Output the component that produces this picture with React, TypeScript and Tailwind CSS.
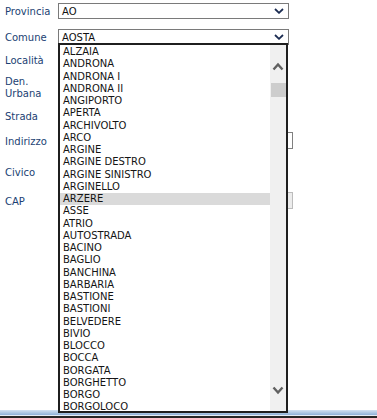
import React from "react";

const items = [
  "ALZAIA","ANDRONA","ANDRONA I","ANDRONA II","ANGIPORTO","APERTA","ARCHIVOLTO","ARCO","ARGINE","ARGINE DESTRO","ARGINE SINISTRO","ARGINELLO","ARZERE","ASSE","ATRIO","AUTOSTRADA","BACINO","BAGLIO","BANCHINA","BARBARIA","BASTIONE","BASTIONI","BELVEDERE","BIVIO","BLOCCO","BOCCA","BORGATA","BORGHETTO","BORGO","BORGOLOCO",
];

function Chevron() {
  return (
    <svg width="10" height="6" viewBox="0 0 10 6" className="shrink-0">
      <path d="M1 1 L5 4.8 L9 1" fill="none" stroke="#1b2c52" strokeWidth="1.8" />
    </svg>
  );
}

function Select({ value }: { value: string }) {
  return (
    <div className="flex h-[16px] w-[231px] items-center justify-between border border-[#7a7a7a] bg-white pl-[3px] pr-[4px] text-[10px] leading-none text-[#111]">
      <span className="mt-[1px]">{value}</span>
      <Chevron />
    </div>
  );
}

function Label({ children, className = "" }: { children: React.ReactNode; className?: string }) {
  return (
    <div className={"w-[58px] shrink-0 pl-[5px] text-[10px] leading-[11.6px] text-[#1b3f73] " + className}>
      {children}
    </div>
  );
}

export default function App() {
  return (
    <div
      className="relative flex h-[418px] w-[377px] flex-col overflow-hidden bg-white"
      style={{ fontFamily: '"DejaVu Sans", Verdana, sans-serif' }}
    >
      <div className="flex flex-col">
        <div className="mt-[3px] flex h-[16px] items-center">
          <Label className="mt-[2px]">Provincia</Label>
          <Select value="AO" />
        </div>
        <div className="mt-[10px] flex h-[16px] items-center">
          <Label className="mt-[2px]">Comune</Label>
          <Select value="AOSTA" />
        </div>
        <div className="mt-[7px] flex h-[16px] items-center">
          <Label className="mt-[2px]">Località</Label>
          <div className="h-[16px] w-[200px] border border-[#8a8a8a] bg-white" />
        </div>
        <div className="mt-[8px] flex h-[24px] items-center">
          <Label>
            Den.
            <br />
            Urbana
          </Label>
          <div className="h-[16px] w-[200px] border border-[#8a8a8a] bg-white" />
        </div>
        <div className="mt-[8px] flex h-[16px] items-center">
          <Label className="mt-[2px]">Strada</Label>
          <div className="h-[16px] w-[200px] border border-[#8a8a8a] bg-white" />
        </div>
        <div className="mt-[8px] flex h-[17px] items-center">
          <Label className="mt-[2px]">Indirizzo</Label>
          <div className="h-[17px] w-[235px] border border-[#808080] bg-white" />
        </div>
        <div className="mt-[15px] flex h-[16px] items-center">
          <Label className="mt-[2px]">Civico</Label>
          <div className="h-[16px] w-[100px] border border-[#8a8a8a] bg-white" />
        </div>
        <div className="mt-[12px] flex h-[17px] items-center">
          <Label className="mt-[2px]">CAP</Label>
          <div className="h-[17px] w-[235px] border border-[#bcbcbc] bg-[#ececec]" />
        </div>
      </div>

      <div className="mt-auto flex flex-col">
        <div className="h-[5px] bg-gradient-to-b from-[#d3e2f2] to-[#8fb1d8]" />
        <div className="h-[1px] bg-[#e4ecf5]" />
        <div className="h-[2px] bg-[#262626]" />
      </div>

      {/* open dropdown list */}
      <div className="absolute left-[58px] top-[43px] z-10 flex h-[370px] w-[230px] border-2 border-[#1f1f1f] bg-white">
        <div className="flex-1 overflow-hidden pt-[1px]">
          {items.map((it) => (
            <div
              key={it}
              className={
                "h-[12.25px] whitespace-nowrap pl-[3px] text-[10px] leading-[12.25px] text-[#141414] " +
                (it === "ARZERE" ? "bg-[#dadada]" : "")
              }
            >
              {it}
            </div>
          ))}
        </div>
        <div className="flex w-[16px] flex-col items-center bg-[#f0f0f0]">
          <svg width="12" height="9" viewBox="0 0 12 9" className="mt-[17px]">
            <path d="M1.5 7.5 L6 2.5 L10.5 7.5" fill="none" stroke="#606060" strokeWidth="2.4" />
          </svg>
          <div className="ml-[1px] mt-[12px] h-[14px] w-[15px] bg-[#cdcdcd]" />
          <div className="flex-1" />
          <svg width="12" height="9" viewBox="0 0 12 9" className="mb-[16px]">
            <path d="M1.5 1.5 L6 6.5 L10.5 1.5" fill="none" stroke="#606060" strokeWidth="2.4" />
          </svg>
        </div>
      </div>
    </div>
  );
}
